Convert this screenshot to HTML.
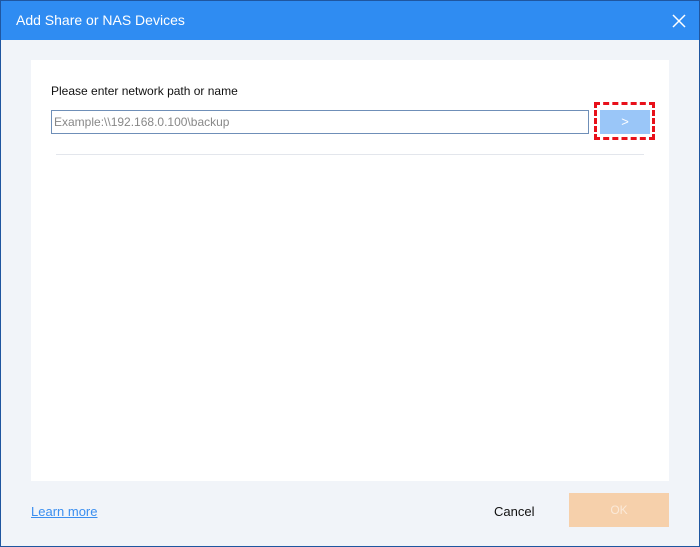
<!DOCTYPE html>
<html><head><style>
body{margin:0;width:700px;height:547px;overflow:hidden;font-family:"Liberation Sans","DejaVu Sans",sans-serif;font-size:12px;}
.win{position:absolute;left:0;top:0;width:698px;height:545px;border:1px solid #1f56a0;background:#f1f4f9;}
.title{position:absolute;left:0;top:0;width:698px;height:39px;background:#2f8cf2;color:#fff;font-size:14px;}
.title span{position:absolute;left:15px;top:11px;}
.panel{position:absolute;left:30px;top:59px;width:638px;height:421px;background:#fff;}
</style></head><body>
<div class="win">
<div class="title"><span>Add Share or NAS Devices</span>
<svg style="position:absolute;left:671px;top:13px" width="14" height="14"><path d="M1 1L13 13M13 1L1 13" stroke="#fff" stroke-width="1.5"/></svg></div>
<div class="panel"></div>
<div style="position:absolute;left:50px;top:83px;color:#111">Please enter network path or name</div>
<div style="position:absolute;left:50px;top:109px;width:534px;height:22px;border:1px solid #6f8fb8;background:#fff;color:#888;line-height:22px;padding-left:2px;box-sizing:content-box">Example:\\192.168.0.100\backup</div>
<div style="position:absolute;left:593px;top:101px;width:55px;height:32px;border:3px dashed #e8101a;"></div>
<div style="position:absolute;left:599px;top:109px;width:50px;height:24px;background:#9ac6f8;color:#fff;text-align:center;line-height:24px;font-size:13px">&gt;</div>
<div style="position:absolute;left:55px;top:153px;width:588px;height:1px;background:#e3e6ec"></div>
<div style="position:absolute;left:30px;top:503px;color:#3a8ef0;text-decoration:underline;font-size:13px">Learn more</div>
<div style="position:absolute;left:493px;top:503px;color:#111;font-size:13px">Cancel</div>
<div style="position:absolute;left:568px;top:492px;width:100px;height:34px;background:#f6d0ab;color:#fbe9d8;text-align:center;line-height:34px">OK</div>
</div>
</body></html>
